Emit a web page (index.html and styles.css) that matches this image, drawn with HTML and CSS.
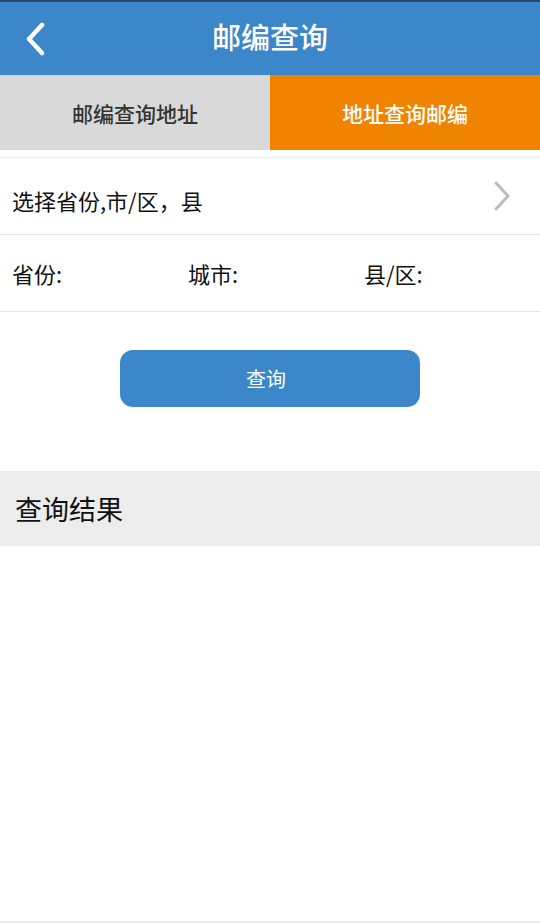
FILE: index.html
```html
<!DOCTYPE html>
<html lang="zh-CN">
<head>
  <meta charset="UTF-8">
  <meta name="viewport" content="width=device-width, initial-scale=1.0">
  <title>邮编查询</title>
  <link rel="stylesheet" href="styles.css">
</head>
<body>
  <div class="page">
    <!-- 顶部标题栏 -->
    <header class="title-bar">
      <button class="back-button">
        <svg width="22" height="34" viewBox="0 0 22 34">
          <polyline points="18,3 5,17 18,31" fill="none" stroke="#fff" stroke-width="4.5" stroke-linecap="round" stroke-linejoin="round"/>
        </svg>
      </button>
      <h1 class="title">邮编查询</h1>
    </header>

    <!-- 切换标签 -->
    <nav class="tabs">
      <div class="tab">邮编查询地址</div>
      <div class="tab active">地址查询邮编</div>
    </nav>

    <!-- 选择地区 -->
    <div class="form-list">
      <div class="form-row picker">
        <span class="picker-label">选择省份,市/区，县</span>
        <svg class="chevron" width="20" height="32" viewBox="0 0 20 32">
          <polyline points="4,3 16,16 4,29" fill="none" stroke="#bdbdbd" stroke-width="3" stroke-linecap="round" stroke-linejoin="round"/>
        </svg>
      </div>
      <div class="form-row fields">
        <span class="field">省份:</span>
        <span class="field">城市:</span>
        <span class="field">县/区:</span>
      </div>
    </div>

    <div class="action">
      <button class="query-button">查询</button>
    </div>

    <!-- 查询结果 -->
    <div class="result-header">查询结果</div>
    <div class="result-body"></div>
  </div>
</body>
</html>
```

FILE: styles.css
```css
html, body {
  margin: 0;
  padding: 0;
  width: 100%;
  height: 100%;
  background: #fff;
  font-family: "Noto Sans CJK SC", "Noto Sans", sans-serif;
  overflow: hidden;
}

.page {
  display: flex;
  flex-direction: column;
  height: 923px;
  box-sizing: border-box;
  border-bottom: 2px solid #ececec;
}

/* 标题栏 */
.title-bar {
  position: relative;
  height: 73px;
  background: #3b87c9;
  border-top: 2px solid #244a70;
  display: flex;
  align-items: center;
  justify-content: center;
}

.back-button {
  position: absolute;
  left: 24px;
  top: 20px;
  padding: 0;
  border: none;
  background: transparent;
  display: flex;
}

.title {
  margin: 0 0 4px;
  color: #fff;
  font-size: 29px;
  font-weight: 500;
  line-height: 1;
}

/* 标签 */
.tabs {
  display: flex;
  height: 75px;
}

.tab {
  flex: 1;
  display: flex;
  align-items: center;
  justify-content: center;
  background: #d9d9d9;
  color: #333;
  font-size: 21px;
  font-weight: 500;
}

.tab.active {
  background: #f08300;
  color: #fff;
}

/* 表单 */
.form-list {
  margin-top: 7px;
  border-top: 1px solid #ececec;
}

.form-row {
  height: 76px;
  border-bottom: 1px solid #e6e6e6;
  display: flex;
  align-items: center;
  font-size: 22px;
  color: #111;
}

.picker {
  justify-content: space-between;
  padding: 0 28px 0 12px;
}

.picker-label {
  margin-top: 7px;
}

.chevron {
  display: block;
}

.fields {
  padding-left: 12px;
}

.field {
  width: 178px;
}

.action {
  display: flex;
  justify-content: center;
  padding: 38px 0 64px;
}

.query-button {
  width: 300px;
  height: 57px;
  border: none;
  border-radius: 13px;
  background: #3b87c9;
  color: #fff;
  font-family: inherit;
  font-size: 20px;
  padding: 0 8px 0 0;
}

/* 结果 */
.result-header {
  height: 75px;
  background: #ececec;
  display: flex;
  align-items: center;
  padding-left: 15px;
  font-size: 27px;
  color: #111;
}

.result-body {
  flex: 1;
}
```
